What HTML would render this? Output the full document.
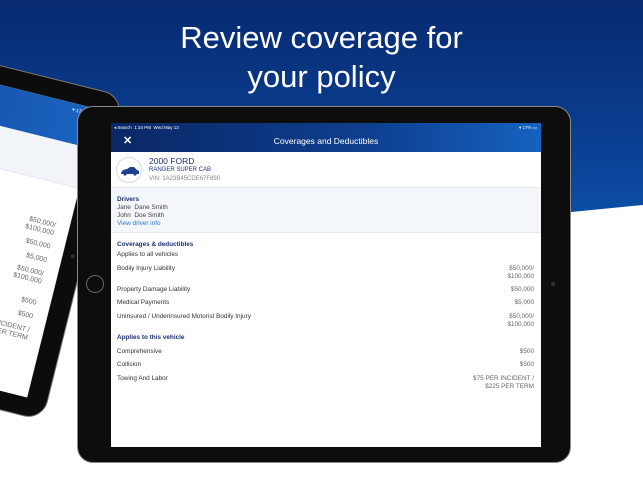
<!DOCTYPE html>
<html><head><meta charset="utf-8"><style>
*{margin:0;padding:0;box-sizing:border-box}
body{width:643px;height:482px;overflow:hidden;position:relative;background:#fff;font-family:"Liberation Sans",sans-serif}
.bg{position:absolute;left:0;top:0;width:643px;height:482px;background:linear-gradient(180deg,#082a70 0%,#0a3f92 30%,#0c5ab6 55%,#0e63c0 70%);clip-path:polygon(0 0,643px 0,643px 205px,0 268px)}
h1{position:absolute;left:0;width:643px;top:18px;text-align:center;color:#fff;font-weight:normal;font-size:31px;line-height:39px}
.t{position:absolute}
.lt{left:-376px;top:96px;width:500px;height:335px;transform-origin:top right;transform:rotate(14deg);background:#0c0c0c;border-radius:20px;border:1px solid #777}
.lt .scr{position:absolute;left:20px;top:18px;right:20px;bottom:18px;background:#fff;overflow:hidden}
.lt .hd{height:40px;background:linear-gradient(90deg,#0c2d70,#1a64c2)}
.lt .band{height:42px;background:#f1f4f8;border-bottom:1px solid #e5e9ee}
.lt .v{position:absolute;right:14px;font-size:7px;color:#666;text-align:right;line-height:8px}
.mt{left:77px;top:106px;width:494px;height:357px;background:#0d0d0d;border-radius:16px;border:1.5px solid #8a8a8a}
.scr2{position:absolute;left:111px;top:123px;width:430px;height:324px;background:#fff;overflow:hidden}
.nav{height:29px;background:linear-gradient(90deg,#0a2766,#0e3f8f 60%,#1562c0);position:relative;color:#fff}
.sb{position:absolute;top:2px;left:3px;font-size:4.5px}
.sbr{position:absolute;top:2px;right:4px;font-size:4.5px}
.ttl{position:absolute;top:13px;width:100%;text-align:center;font-size:8.5px}
.x{position:absolute;left:12px;top:11px;font-size:11px;font-weight:bold}
.car{height:36px;position:relative;border-bottom:1px solid #e6e9ee}
.circ{position:absolute;left:5px;top:5px;width:26px;height:26px;border-radius:50%;border:1px solid #d5d9e0;background:#fff}
.drv{height:45px;background:#f3f6fa;padding:8px 6px;font-size:6.4px;color:#444;line-height:8px;border-bottom:1px solid #e5e9ee}
.r{position:absolute;font-size:6.4px;color:#333}
.h{color:#1e2f6e;font-weight:bold}
.val{position:absolute;right:7px;font-size:6.4px;color:#666;text-align:right;line-height:8px}
</style></head><body>
<div class="bg"></div>
<h1>Review coverage for<br>your policy</h1>

<div class="t lt"><div class="scr">
<div class="hd"><span style="position:absolute;right:8px;top:4px;color:#fff;font-size:5px">▾ 17% ▮</span></div>
<div class="band"></div>
<div class="v" style="top:120px">$50,000/<br>$100,000</div>
<div class="v" style="top:142px">$50,000</div>
<div class="v" style="top:156px">$5,000</div>
<div class="v" style="top:170px">$50,000/<br>$100,000</div>
<div class="v" style="top:200px">$500</div>
<div class="v" style="top:214px">$500</div>
<div class="v" style="top:228px">$75 PER INCIDENT /<br>$225 PER TERM</div>
</div>
<div style="position:absolute;right:8px;top:165px;width:4px;height:4px;border-radius:50%;background:#333"></div>
</div>

<div class="t mt"></div>
<div style="position:absolute;left:86px;top:275px;width:18px;height:18px;border-radius:50%;border:1px solid #666"></div>
<div style="position:absolute;left:551px;top:282px;width:4px;height:4px;border-radius:50%;background:#333"></div>

<div class="scr2">
<div class="nav"><span class="sb">◂ Search&nbsp;&nbsp;1:34 PM&nbsp;&nbsp;Wed May 13</span><span class="sbr">▾ 17% ▭</span><span class="x">✕</span><div class="ttl">Coverages and Deductibles</div></div>
<div class="car"><div class="circ"><svg width="26" height="26" viewBox="0 0 26 26"><path d="M4 15 L6 12 L10 11 L13 9 L17 9 L20 12 L22 13 L22 16 L4 16Z" fill="#1e3f8f"/><circle cx="8" cy="16" r="1.6" fill="#1e3f8f"/><circle cx="18" cy="16" r="1.6" fill="#1e3f8f"/></svg></div>
<div class="r" style="left:38px;top:4px;font-size:8.5px;color:#1e2f6e">2000 FORD</div>
<div class="r" style="left:38px;top:15px;font-size:6px;color:#1e2f6e">RANGER SUPER CAB</div>
<div class="r" style="left:38px;top:24px;font-size:6px;color:#888">VIN: 1A23B45CDE67F890</div></div>
<div class="drv"><div class="h">Drivers</div>Jane&nbsp; Dane Smith<br>John&nbsp; Doe Smith<br><span style="color:#2a7bd6">View driver info</span></div>
<div class="r h" style="left:6px;top:118px">Coverages &amp; deductibles</div>
<div class="r" style="left:6px;top:128px">Applies to all vehicles</div>
<div class="r" style="left:6px;top:142px">Bodily Injury Liability</div>
<div class="val" style="top:142px">$50,000/<br>$100,000</div>
<div class="r" style="left:6px;top:163px">Property Damage Liability</div>
<div class="val" style="top:163px">$50,000</div>
<div class="r" style="left:6px;top:176px">Medical Payments</div>
<div class="val" style="top:176px">$5,000</div>
<div class="r" style="left:6px;top:190px">Uninsured / Underinsured Motorist Bodily Injury</div>
<div class="val" style="top:190px">$50,000/<br>$100,000</div>
<div class="r h" style="left:6px;top:211px">Applies to this vehicle</div>
<div class="r" style="left:6px;top:225px">Comprehensive</div>
<div class="val" style="top:225px">$500</div>
<div class="r" style="left:6px;top:238px">Collision</div>
<div class="val" style="top:238px">$500</div>
<div class="r" style="left:6px;top:252px">Towing And Labor</div>
<div class="val" style="top:252px">$75 PER INCIDENT /<br>$225 PER TERM</div>
</div>
</body></html>
